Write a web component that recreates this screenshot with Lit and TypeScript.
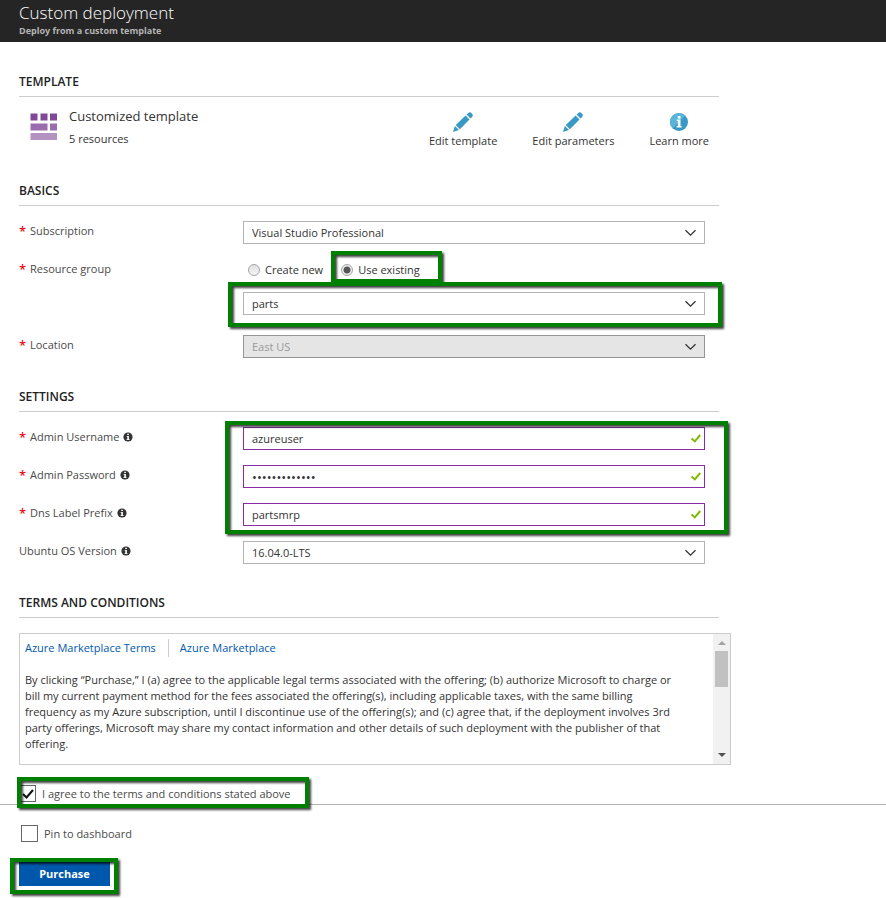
import { LitElement, html, svg, css, nothing } from "lit";
import { customElement } from "lit/decorators.js";

const chevron = html`<svg class="chevron" viewBox="0 0 12 8" width="12" height="8" aria-hidden="true">
  <path d="M0.5 1.2 L5.5 6.2 L10.500 1.2" fill="none" stroke="#333" stroke-width="1.3" />
</svg>`;

const check = html`<svg class="tick" viewBox="0 0 10 9" width="10" height="9" aria-hidden="true">
  <path d="M0.6 4.4 L3.8 7.4 L9.2 1" fill="none" stroke="#7fba00" stroke-width="2" />
</svg>`;

const info = html`<svg class="info" viewBox="0 0 10 10" width="10" height="10" aria-hidden="true">
  <circle cx="5" cy="5" r="4.6" fill="#333" />
  <path d="M4.2 1.7h1.7v1.3H4.2zM3.6 4h2.3v3.2h.7V8H3.5v-.8h.8V4.8h-.7z" fill="#fff" />
</svg>`;

const pencil = html`<svg viewBox="0 0 20 20" width="20" height="20" aria-hidden="true">
  <path d="M0 20 L1.9 14 L6 18.100 Z" fill="#3999c6" />
  <path d="M2.800 13.100 L12.600 3.500 L16.500 7.400 L6.900 17.200 Z" fill="#3999c6" />
  <path d="M13.600 2.600 L15.300 0.900 Q17 -0.600 18.600 1.200 Q20.800 3.200 19.100 4.900 L17.500 6.500 Z" fill="#3999c6" />
</svg>`;

const learn = html`<svg viewBox="0 0 20 20" width="20" height="20" aria-hidden="true">
  <circle cx="10" cy="10" r="9" fill="#3999c6" />
  <path d="M3.600 16.400 A9 9 0 0 1 16.400 3.600 Z" fill="#59b4d9" />
  <path d="M8.700 4h2.800v2.400H8.700zM7.700 7.500h3.800v6.600h1.200v1.400H7.600v-1.400h1.200V8.900H7.700z" fill="#fff" />
</svg>`;

const block = (x: number, y: number, w: number, fill: string) =>
  svg`<rect x=${x} y=${y} width=${w} height="7" fill=${fill} />`;

@customElement("app-root")
export class AppRoot extends LitElement {
  static styles = css`
    :host {
      display: block;
      min-height: 100vh;
      background: #fff;
      color: #333;
      font: 11px/16px "Open Sans", "Noto Sans", sans-serif;
    }
    * { box-sizing: border-box; }
    h1, h2, p { margin: 0; }
    svg { display: block; flex: none; }
    button, input, select { font: inherit; color: inherit; }

    .header {
      height: 42px;
      padding: 1px 19px 0;
      background: #252525;
      color: #fff;
    }
    .title { font-size: 17px; line-height: 24px; font-weight: 300; }
    .subtitle { font-size: 9px; line-height: 12px; font-weight: 700; color: #b4b4b4; }

    .content { padding: 32px 19px 2px; }
    .section { max-width: 700px; margin-bottom: 31px; }
    .section.last { margin-bottom: 0; }
    .heading {
      padding-bottom: 6px;
      border-bottom: 1px solid #ccc;
      font-size: 12px;
      line-height: 16px;
      font-weight: 600;
      color: #222;
    }

    .template { display: flex; height: 55px; padding: 11px 10px 0 11px; }
    .template .blocks { margin-top: 5px; }
    .about { flex: 1; padding-left: 11px; }
    .name { font-size: 13px; line-height: 16px; margin-bottom: 7px; }
    .actions { display: flex; gap: 35px; padding-top: 4px; align-items: flex-start; }
    .action {
      display: flex;
      flex-direction: column;
      align-items: center;
      gap: 1px;
      padding: 0;
      border: 0;
      background: none;
      cursor: pointer;
    }

    .rows {
      position: relative;
      display: grid;
      gap: 15px;
      padding: 15px 14px 0 0;
    }
    .row { display: grid; grid-template-columns: 224px 1fr; align-items: start; }
    .label { display: flex; align-items: center; padding-top: 2px; color: #4a4a4a; }
    .star { width: 11px; color: #e81123; font-size: 13px; font-weight: 600; }
    .info { margin-left: 4px; }

    .control { position: relative; display: grid; align-items: center; }
    .control > .field, .control > svg { grid-area: 1 / 1; }
    .control > svg { justify-self: end; pointer-events: none; z-index: 1; }
    .chevron { margin-right: 8px; }
    .tick { margin-right: 4px; }
    .field {
      width: 100%;
      height: 23px;
      margin: 0;
      padding: 0 24px 0 8px;
      border: 1px solid #b4b4b4;
      border-radius: 0;
      background: #fff;
      appearance: none;
      outline: none;
    }
    .field:disabled { background: #e5e5e5; border-color: #959595; color: #999; opacity: 1; }
    .field.edited { border-color: #8a2da5; }
    .field[type="password"] { font-size: 13px; }

    .group { padding-bottom: 5px; }
    .radios { display: flex; gap: 18px; height: 22px; padding-left: 5px; margin-bottom: 11px; }
    .choice { position: relative; display: flex; align-items: center; gap: 5px; }
    .radio {
      appearance: none;
      width: 12px;
      height: 12px;
      margin: 0;
      border: 1px solid #a6a6a6;
      border-radius: 50%;
      background: linear-gradient(#e0e0e0, #f4f4f4);
    }
    .radio:checked { background: radial-gradient(circle, #555 0 3px, #eee 4px); }

    .mark {
      position: absolute;
      z-index: 2;
      border: 4px solid #008000;
      filter: drop-shadow(2px 2px 1px rgba(0, 0, 0, 0.75));
      pointer-events: none;
    }
    .mark-choice { inset: -8px -22px -2px -10px; }
    .mark-select { inset: -10px -17px -12px -15px; }
    .mark-inputs { inset: 9px -9px -8px 206px; }
    .mark-agree { inset: -8px -18px -6px -2px; }
    .mark-purchase { inset: -4px -8px -8px -9px; }

    .terms {
      display: flex;
      max-width: 712px;
      height: 132px;
      margin: 15px 0 20px;
      border: 1px solid #ccc;
    }
    .legal { flex: 1; padding: 5px 33px 0 5px; overflow: hidden; }
    .links { display: flex; margin-bottom: 15px; line-height: 18px; }
    .links a { color: #0058ad; text-decoration: none; }
    .links a + a { margin-left: 12px; padding-left: 11px; border-left: 1px solid #ccc; }
    .scroll {
      display: flex;
      flex-direction: column;
      align-items: center;
      width: 17px;
      padding: 7px 0;
      background: #f1f1f1;
    }
    .thumb { width: 13px; height: 36px; margin: 6px 0 auto; background: #c1c1c1; }

    .option { position: relative; display: flex; width: fit-content; align-items: center; gap: 6px; color: #4a4a4a; }
    .tickbox { display: grid; place-items: center; }
    .tickbox > * { grid-area: 1 / 1; }
    .box {
      appearance: none;
      width: 17px;
      height: 17px;
      margin: 0;
      border: 1px solid #666;
      background: #fff;
    }
    .footer {
      display: grid;
      justify-items: start;
      gap: 20px;
      padding: 20px 19px 12px;
      border-top: 1px solid #b4b4b4;
    }
    .pin { margin-left: 2px; }
    .buy { position: relative; display: flex; }
    .purchase {
      width: 91px;
      height: 24px;
      padding: 0;
      border: 0;
      background: #0058ad;
      color: #fff;
      font-weight: 700;
      cursor: pointer;
    }
  `;

  private label(id: string, text: string, required = true, hint = false) {
    return html`<label class="label" for=${id}>
      ${required ? html`<span class="star">*</span>` : nothing}<span>${text}</span>${hint ? info : nothing}
    </label>`;
  }

  private select(id: string, value: string, disabled = false) {
    return html`<select class="field" id=${id} ?disabled=${disabled}>
        <option>${value}</option></select>${chevron}`;
  }

  private input(id: string, text: string, value: string, type = "text") {
    return html`<div class="row">
      ${this.label(id, text, true, true)}
      <div class="control">
        <input class="field edited" id=${id} type=${type} .value=${value} />${check}
      </div>
    </div>`;
  }

  render() {
    return html`
      <header class="header">
        <h1 class="title">Custom deployment</h1>
        <p class="subtitle">Deploy from a custom template</p>
      </header>

      <main class="content">
        <section class="section">
          <h2 class="heading">TEMPLATE</h2>
          <div class="template">
            <svg class="blocks" viewBox="0 0 28 28" width="28" height="28" aria-hidden="true">
              ${block(0.5, 0.5, 7, "#804998")}${block(10.5, 0.5, 7, "#804998")}${block(20, 0.5, 7, "#804998")}
              ${block(0.5, 10.5, 17, "#9b6cad")}${block(20, 10.5, 7, "#9b6cad")}
              ${block(0.5, 20, 26.5, "#b392c2")}
            </svg>
            <div class="about">
              <p class="name">Customized template</p>
              <p>5 resources</p>
            </div>
            <div class="actions">
              <button class="action">${pencil}<span>Edit template</span></button>
              <button class="action">${pencil}<span>Edit parameters</span></button>
              <button class="action">${learn}<span>Learn more</span></button>
            </div>
          </div>
        </section>

        <section class="section">
          <h2 class="heading">BASICS</h2>
          <div class="rows">
            <div class="row">
              ${this.label("subscription", "Subscription")}
              <div class="control">${this.select("subscription", "Visual Studio Professional")}</div>
            </div>
            <div class="row group">
              ${this.label("group", "Resource group")}
              <div>
                <div class="radios">
                  <label class="choice"><input class="radio" type="radio" name="mode" />Create new</label>
                  <label class="choice">
                    <input class="radio" type="radio" name="mode" checked />Use existing
                    <span class="mark mark-choice"></span>
                  </label>
                </div>
                <div class="control">
                  ${this.select("group", "parts")}
                  <span class="mark mark-select"></span>
                </div>
              </div>
            </div>
            <div class="row">
              ${this.label("location", "Location")}
              <div class="control">${this.select("location", "East US", true)}</div>
            </div>
          </div>
        </section>

        <section class="section">
          <h2 class="heading">SETTINGS</h2>
          <div class="rows">
            ${this.input("username", "Admin Username", "azureuser")}
            ${this.input("password", "Admin Password", "accesscode123", "password")}
            ${this.input("dns", "Dns Label Prefix", "partsmrp")}
            <span class="mark mark-inputs"></span>
          </div>
          <div class="rows">
            <div class="row">
              ${this.label("ubuntu", "Ubuntu OS Version", false, true)}
              <div class="control">${this.select("ubuntu", "16.04.0-LTS")}</div>
            </div>
          </div>
        </section>

        <section class="section last">
          <h2 class="heading">TERMS AND CONDITIONS</h2>
        </section>
        <div class="terms">
          <div class="legal">
            <nav class="links">
              <a href="#terms">Azure Marketplace Terms</a><a href="#marketplace">Azure Marketplace</a>
            </nav>
            <p>
              By clicking “Purchase,” I (a) agree to the applicable legal terms associated with the offering; (b)
              authorize Microsoft to charge or bill my current payment method for the fees associated the offering(s),
              including applicable taxes, with the same billing frequency as my Azure subscription, until I discontinue
              use of the offering(s); and (c) agree that, if the deployment involves 3rd party offerings, Microsoft may
              share my contact information and other details of such deployment with the publisher of that offering.
            </p>
          </div>
          <div class="scroll" aria-hidden="true">
            <svg viewBox="0 0 8 4" width="8" height="4"><path d="M4 0L8 4H0z" fill="#a3a3a3" /></svg>
            <span class="thumb"></span>
            <svg viewBox="0 0 8 4" width="8" height="4"><path d="M0 0H8L4 4z" fill="#505050" /></svg>
          </div>
        </div>

        <label class="option">
          <span class="tickbox">
            <input class="box" type="checkbox" checked />
            <svg viewBox="0 0 12 10" width="12" height="10" aria-hidden="true">
              <path d="M1 5 L4.500 8.500 L11 1" fill="none" stroke="#111" stroke-width="2" />
            </svg>
          </span>
          I agree to the terms and conditions stated above
          <span class="mark mark-agree"></span>
        </label>
      </main>

      <footer class="footer">
        <label class="option pin"><input class="box" type="checkbox" />Pin to dashboard</label>
        <div class="buy">
          <button class="purchase">Purchase</button>
          <span class="mark mark-purchase"></span>
        </div>
      </footer>
    `;
  }
}
